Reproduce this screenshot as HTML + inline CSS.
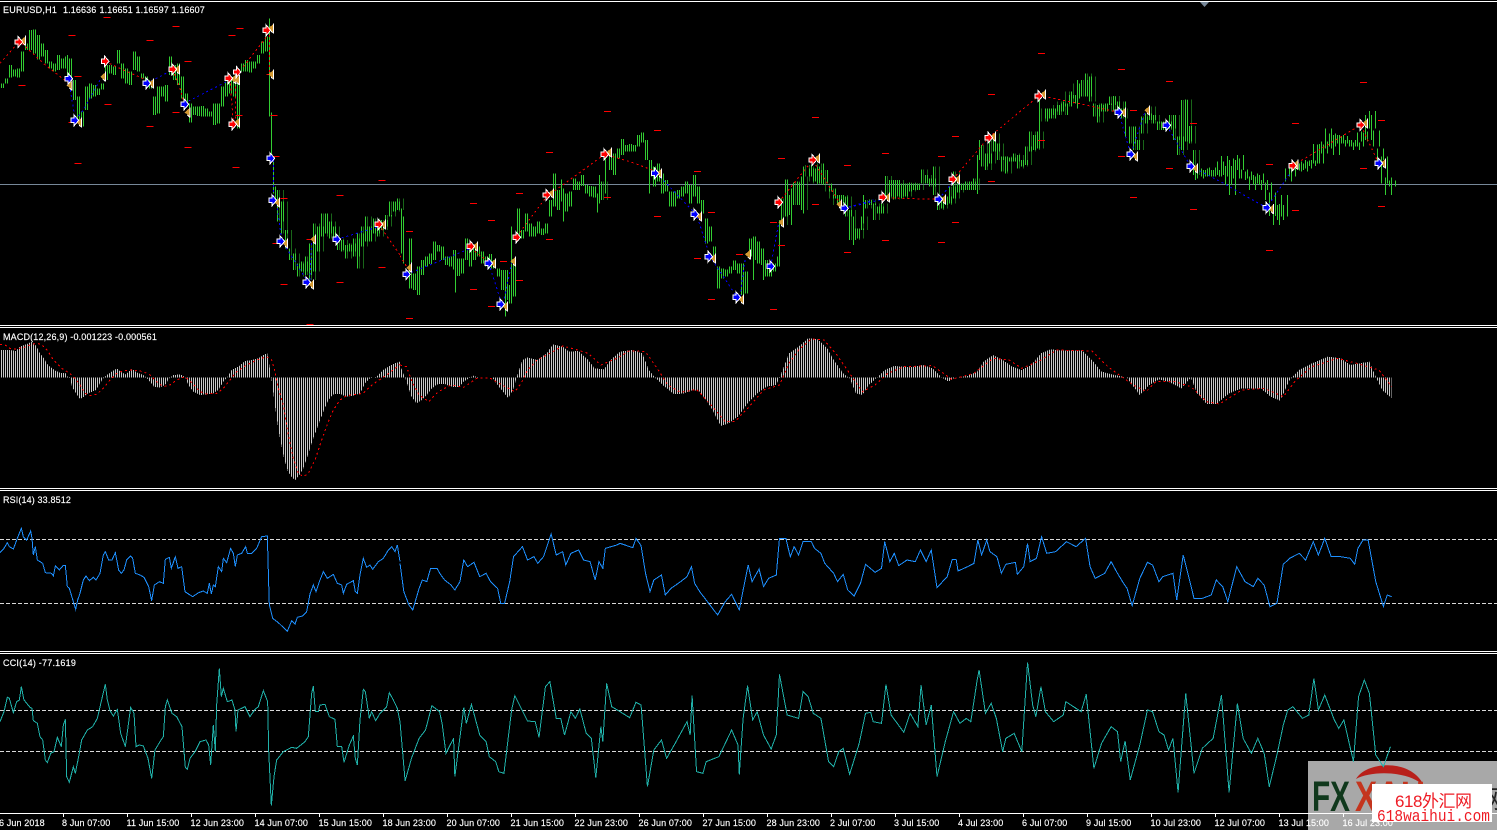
<!DOCTYPE html>
<html lang="en">
<head>
<meta charset="utf-8">
<title>EURUSD,H1</title>
<style>
html,body{margin:0;padding:0;background:#000;width:1497px;height:830px;overflow:hidden}
svg{display:block}
text{font-family:"Liberation Sans","Noto Sans CJK SC",sans-serif;font-size:9px;fill:#fff;letter-spacing:.12px;stroke:#fff;stroke-width:.15px}
text.w{stroke:none;letter-spacing:0}
.l{vector-effect:non-scaling-stroke;stroke-width:1;fill:none;shape-rendering:crispEdges}
.d{stroke-dasharray:2 3}
.r{stroke:#f00}
.b{stroke:#00f}
</style>
</head>
<body>
<svg xmlns="http://www.w3.org/2000/svg" width="1497" height="830" viewBox="0 0 1497 830">
<defs>
<pattern id="sa" patternUnits="userSpaceOnUse" width="4" height="10"><rect x="1" width="1" height="10" fill="#32cd32"/></pattern>
<pattern id="sb" patternUnits="userSpaceOnUse" width="4" height="10"><rect x="3" width="1" height="10" fill="#32cd32"/></pattern>
<pattern id="sg" patternUnits="userSpaceOnUse" width="2" height="10"><rect x="1" width="1" height="10" fill="#32cd32"/></pattern>
<pattern id="sw" patternUnits="userSpaceOnUse" width="2" height="10"><rect x="1" width="1" height="10" fill="#c8c8c8"/></pattern>
<g id="ra" shape-rendering="crispEdges"><polygon points="-9,-5 0,-5 0,-12 10,0 0,12 0,5 -9,5" fill="#f00" stroke="#fff" stroke-width="6" style="paint-order:stroke"/></g>
<g id="ba" shape-rendering="crispEdges"><polygon points="-9,-5 0,-5 0,-12 10,0 0,12 0,5 -9,5" fill="#00f" stroke="#fff" stroke-width="6" style="paint-order:stroke"/></g>
<g id="t" shape-rendering="crispEdges"><polygon points="7,-13 -8,0 7,13" fill="#d49a33"/><path d="M8 -15V15M7 14L0 8" stroke="#fff" stroke-width="3" fill="none"/></g>
<g id="wb" fill="none" stroke="#fff" stroke-width="12" shape-rendering="crispEdges">
<path transform="scale(.33333)" d="M0 250V264M12 235V250M24 195V232M36 208V230M48 205V232M60 155V215M72 130V150M84 90V150M96 88V160M108 105V178M120 130V170M132 150V190M144 185V205M156 190V215M168 165V210M180 175V205M192 170V205M204 175V240M216 240V300M228 290V365M240 335V380M252 260V330M264 250V295M276 255V290M288 265V285M300 250V268M312 195V240M324 195V220M336 200V225M348 150V190M360 190V235M372 205V250M384 215V255M396 155V210M408 170V215M420 220V235M432 230V255M444 240V265M456 290V345M468 260V340M480 260V290M492 255V305M504 170V225M516 195V240M528 190V255M540 230V295M552 280V320M564 310V368M576 320V345M588 320V348M600 318V350M612 325V350M624 335V350M636 310V375M648 310V370M660 260V320M672 245V290M684 240V280M696 230V290M708 240V385M720 190V215M732 180V215M744 185V218M756 185V205M768 165V190M780 125V160M792 110V155M832 570V665M844 605V700M856 690V745M868 745V780M880 760V810M892 790V830M904 785V815M916 770V825M928 730V840M940 670V815M952 680V755M964 640V710M976 640V700M988 665V715M1000 680V710M1012 715V750M1024 720V755M1036 735V775M1048 730V755M1060 715V770M1072 700V805M1084 680V740M1096 650V725M1108 680V725M1120 655V700M1132 680V710M1144 660V690M1156 645V680M1168 605V650M1180 605V635M1192 595V630"/>
<path transform="translate(400,60) scale(.33333)" d="M24 535V685M36 640V690M48 620V705M60 600V645M72 590V620M84 580V612M96 545V600M108 555V575M120 560V600M132 590V615M144 590V620M156 570V628M168 595V648M180 595V640M192 535V600M204 570V620M216 560V600M228 560V590M240 575V610M252 590V620M264 582V625M276 600V625M288 625V650M300 630V690M312 630V720M324 675V730M336 615V710M348 445V530M360 510V535M372 460V515M384 490V530M396 500V530M408 485V520M420 505V525M432 490V520M444 420V470M456 340V440M468 390V450M480 385V425M492 400V455M504 395V440M516 355V390M528 365V390M540 345V378M552 375V400M564 378V410M576 380V412M588 400V430M604 365V420M624 280V330M636 280V345M648 265V295M660 237V285M672 255V275M684 252V275M696 255V275M708 225V260M720 217V248M732 240V300M744 300V350M756 320V380M768 310V365M780 340V400M792 360V395M804 395V440M816 395V440M828 390V415M840 380V410M852 365V400M864 375V430M876 345V410M888 380V430M900 420V460M912 475V550M924 500V545M936 560V600M948 620V685M960 625V655M972 628V650M984 620V640M996 602V630M1008 610V640M1020 610V705M1032 635V700M1044 535V590M1056 530V600M1068 545V610M1080 565V615M1092 600V650M1104 615V650M1116 610V635M1128 590V620M1144 415V495M1152 358V470M1164 405V465M1180 367V435M1192 365V435M1204 350V450M1222 315V350M1234 325V365M1246 320V370M1258 310V375M1270 330V370M1282 370V395M1294 385V415M1306 405V435M1318 405V430"/>
<path transform="translate(840,40) scale(.33333)" d="M4 465V510M16 470V530M28 510V600M40 565V600M52 565V595M64 530V570M76 480V505M88 478V495M100 490V540M112 500V520M124 490V520M136 408V470M148 420V475M160 420V478M172 420V470M184 430V475M196 430V470M208 428V455M220 430V450M232 430V450M244 388V430M256 405V430M268 415V440M280 380V465M292 475V510M304 470V505M316 470V495M328 440V490M340 395V475M352 430V458M364 430V450M376 425V450M388 425V450M400 415V450M424 315V380M436 340V390M448 300V370M460 280V335M472 310V360M484 350V395M496 350V400M508 352V365M520 340V365M532 345V385M544 360V380M556 320V375M568 275V335M580 285V330M592 275V325M610 205V245M622 205V235M634 205V235M646 195V225M658 185V215M670 190V225M682 155V200M694 165V190M706 130V175M724 120V170M736 100V170M748 110V185M760 190V230M772 195V248M784 190V215M796 190V215M808 170V195M820 168V215M832 185V215M844 205V235M868 260V310M880 260V330M892 300V330M904 230V280M916 220V250M928 200V240M940 225V250M952 245V270M964 245V270M976 245V270M988 225V265M1000 225V300M1012 290V345M1024 180V330M1036 178V305M1048 258V310M1060 330V405"/>
<path transform="translate(1180,0) scale(.33333)" d="M54 510V535M66 505V530M78 510V530M90 502V530M102 510V530M114 485V525M126 468V530M138 498V555M150 480V585M162 475V535M174 465V510M186 508V535M198 515V540M210 530V570M222 525V555M234 520V550M246 540V570M258 548V600M270 578V648M282 612V675M294 615V660M306 585V650M318 505V545M330 505V530M342 490V512M354 490V510M366 485V515M378 480V505M390 482V498M402 432V490M414 433V490M426 425V460M438 385V445M450 400V440M462 405V465M474 405V430M486 408V430M498 420V440M510 420V440M522 428V450M534 398V440M546 395V425M558 345V420M570 333V385M582 392V440M594 445V480M606 470V550M618 532V585M630 542V560"/>
</g>
<g id="nb" fill="none" stroke="#fff" stroke-width="6" shape-rendering="crispEdges">
<path transform="scale(.33333)" d="M202 165V240M808 55V350M814 338V470M820 470V580M826 560V610"/>
<path transform="translate(400,60) scale(.33333)" d="M4 445V580M10 470V610M166 595V698M316 690V770M334 500V705M484 358V405M490 385V485M592 410V458M598 345V430M616 280V400M748 335V400M1060 540V660M1090 570V660M1138 480V620M1174 385V495M1210 320V460"/>
<path transform="translate(840,40) scale(.33333)" d="M40 530V615M70 465V550M412 345V462M418 300V360M598 180V300M712 120V205M856 185V290M1066 390V420"/>
</g>
<mask id="ma" maskUnits="userSpaceOnUse" x="0" y="0" width="1497" height="325"><use href="#wb"/></mask>
<mask id="mc" maskUnits="userSpaceOnUse" x="0" y="0" width="1497" height="325"><use href="#wb" transform="translate(4,0)"/></mask>
<mask id="ms" maskUnits="userSpaceOnUse" x="0" y="0" width="1497" height="325"><use href="#nb"/></mask>
<mask id="mh" maskUnits="userSpaceOnUse" x="0" y="328" width="1497" height="160">
<g fill="#fff" shape-rendering="crispEdges">
<polygon transform="translate(0,325) scale(.33333)" points="0,158 0,75 30,75 48,78 60,65 78,58 96,50 108,62 120,85 132,100 144,120 156,130 168,138 180,143 198,145 204,158 210,160 216,185 228,205 240,222 252,215 264,205 276,200 288,195 300,175 310,160 320,150 335,140 350,130 362,140 376,148 396,132 410,142 430,150 440,158 450,170 462,185 480,188 495,180 508,160 520,150 540,148 555,155 565,180 580,200 600,210 620,208 640,205 655,195 670,170 680,160 695,135 715,125 735,108 755,105 775,100 790,90 802,85 808,120 814,158 822,220 828,265 834,305 840,340 852,400 864,440 878,460 886,465 898,450 910,430 922,395 940,340 955,300 970,260 985,225 1000,208 1020,207 1040,215 1060,212 1080,205 1095,175 1110,160 1130,155 1150,135 1170,122 1185,115 1200,110 1200,158"/>
<polygon transform="translate(400,330) scale(.63776,.33333)" points="0,143 0,105 4,125 8,143 12,165 18,200 26,220 34,210 42,195 50,175 58,163 70,162 80,170 92,172 100,155 115,137 125,143 145,143 155,170 170,205 178,175 184,135 192,90 200,82 215,90 230,70 240,43 255,50 265,65 280,63 295,90 305,115 320,118 330,90 345,65 365,60 380,70 390,120 400,143 415,170 430,193 445,190 460,180 470,185 480,210 490,240 503,288 515,280 530,260 545,220 560,190 575,170 590,165 600,120 610,70 625,50 640,25 655,28 670,55 680,90 695,130 705,145 715,190 725,195 735,165 745,148 760,120 775,108 800,112 820,105 835,115 850,143 860,155 870,143 890,138 905,125 915,95 930,75 945,90 960,110 975,120 990,105 1005,70 1020,58 1040,62 1070,62 1085,90 1100,125 1120,135 1140,143 1150,170 1160,195 1175,165 1190,148 1205,155 1225,175 1240,143 1250,190 1265,222 1280,222 1300,190 1320,175 1350,175 1365,200 1380,212 1395,150 1410,120 1430,100 1455,80 1475,85 1490,105 1505,100 1520,95 1530,140 1540,180 1555,205 1555,143"/>
</g>
</mask>
</defs>

<rect width="1497" height="830" fill="#000"/>

<!-- watermark base -->
<rect x="1308" y="761" width="189" height="69" fill="#a8a8a8"/>
<path d="M1356 779C1366 761 1412 758 1424 786C1410 771 1372 770 1356 779Z" fill="#b8201a"/>
<text class="w" x="1312" y="811" textLength="38" lengthAdjust="spacingAndGlyphs" style="font-size:43px;font-weight:bold;fill:#10381c">FX</text>
<text class="w" x="1355" y="811" textLength="70" lengthAdjust="spacingAndGlyphs" style="font-size:43px;font-weight:bold;fill:#c4351e">XAU</text>
<text class="w" x="1428" y="808" style="font-size:25px;fill:#222">汇金网</text>

<!-- panel rules -->
<g fill="#fff" shape-rendering="crispEdges">
<rect y="1" width="1497" height="1"/>
<rect y="325" width="1497" height="1"/><rect y="327" width="1497" height="1"/>
<rect y="488" width="1497" height="1"/><rect y="490" width="1497" height="1"/>
<rect y="651" width="1497" height="1"/><rect y="653" width="1497" height="1"/>
<rect y="813" width="1497" height="1"/>
</g>
<polygon points="1200,2 1209,2 1204.5,7" fill="#778899"/>
<rect y="184" width="1497" height="1" fill="#778899" shape-rendering="crispEdges"/>

<!-- price bars -->
<rect x="0" y="0" width="1497" height="325" fill="url(#sa)" mask="url(#ma)"/>
<rect x="0" y="0" width="1497" height="325" fill="url(#sb)" mask="url(#mc)"/>
<rect x="0" y="0" width="1497" height="325" fill="url(#sg)" mask="url(#ms)"/>

<!-- zigzag dotted lines -->
<g transform="scale(.33333)">
<path class="l d r" d="M0 190L56 126M66 130L85 148L130 190L206 250M315 184L370 210L440 240M518 208L540 265L552 310M690 235L700 370M706 230V370M730 200L800 110M808 90V223M1136 673L1200 765"/>
<path class="l d b" d="M206 240L226 360M226 360L250 330L300 240M440 250L518 210M552 310L690 240M820 480V600M830 610L845 720M850 730L920 840M930 840L935 720M1010 718L1136 680"/>
</g>
<g transform="translate(400,60) scale(.33333)">
<path class="l d r" d="M0 587L20 620M212 565L266 605M350 530L440 410L614 283L690 305L770 335M1136 427L1238 300L1320 430"/>
<path class="l d b" d="M20 643L212 565M266 610L305 730M310 730L335 610M770 340L890 465L930 590L1010 710M1020 710L1035 600M1112 619L1136 490M1333 445L1440 420"/>
</g>
<g transform="translate(840,40) scale(.33333)">
<path class="l d r" d="M128 472L180 475L296 478M338 418L446 293L596 168L625 172L700 187L760 200L836 217"/>
<path class="l d b" d="M12 505L100 480M296 478L335 430M836 217L872 343L915 215M980 256L1052 379"/>
</g>
<g transform="translate(1180,0) scale(.33333)">
<path class="l d r" d="M338 497L542 375L596 490"/>
<path class="l d b" d="M45 505L140 555L200 590L260 623L330 520"/>
</g>

<!-- red level marks -->
<g fill="none" stroke="#f00" stroke-width="3" shape-rendering="crispEdges">
<path transform="scale(.33333)" d="M311 52h21M517 79h21M205 106h21M439 121h21M685 106h21M709 85h21M553 184h21M223 229h21M55 256h21M313 313h21M517 337h21M439 379h21M205 367h21M553 442h21M697 502h21M223 490h21M706 346h21M811 346h21M817 469h21M841 595h21M1135 541h21M1009 586h21M919 718h21M817 730h21M1135 802h21M1009 847h21M841 853h21M919 973h21M685 367h21M799 223h21"/>
<path transform="translate(400,60) scale(.33333)" d="M612 154h21M762 211h21M438 277h21M348 400h21M210 430h21M264 481h21M18 514h21M882 334h21M1236 172h21M1134 295h21M612 412h21M762 469h21M924 457h21M1110 487h21M1236 433h21M1134 556h21M882 595h21M1008 583h21M300 604h21M348 661h21M210 688h21M264 739h21M438 538h21M18 775h21M924 718h21M1110 748h21"/>
<path transform="translate(840,40) scale(.33333)" d="M594 40h21M834 88h21M978 124h21M444 163h21M336 289h21M126 340h21M294 349h21M12 376h21M870 211h21M1050 250h21M594 301h21M834 349h21M978 385h21M444 424h21M870 472h21M1050 508h21M336 547h21M126 601h21M294 607h21M12 637h21"/>
<path transform="translate(1180,0) scale(.33333)" d="M336 370h21M258 493h21M540 247h21M594 361h21M540 505h21M336 631h21M594 619h21M258 751h21"/>
</g>

<!-- arrows and triangles -->
<g transform="scale(.33333)">
<use href="#t" x="69" y="122"/><use href="#ra" x="56" y="126"/>
<use href="#t" x="208" y="256"/><use href="#ba" x="206" y="236"/>
<use href="#t" x="237" y="367"/><use href="#ba" x="224" y="361"/>
<use href="#ra" x="315" y="184"/><use href="#t" x="309" y="230"/>
<use href="#t" x="453" y="250"/><use href="#ba" x="440" y="250"/>
<use href="#t" x="531" y="208"/><use href="#ra" x="518" y="208"/>
<use href="#t" x="562" y="337"/><use href="#ba" x="554" y="313"/>
<use href="#t" x="700" y="237"/><use href="#ra" x="686" y="235"/>
<use href="#t" x="711" y="240"/><use href="#ra" x="711" y="216"/>
<use href="#t" x="711" y="367"/><use href="#ra" x="698" y="373"/>
<use href="#t" x="813" y="85"/><use href="#ra" x="800" y="91"/><use href="#t" x="813" y="223"/>
<use href="#ba" x="812" y="475"/>
<use href="#t" x="831" y="607"/><use href="#ba" x="818" y="601"/>
<use href="#t" x="855" y="730"/><use href="#ba" x="842" y="724"/>
<use href="#t" x="939" y="718"/>
<use href="#t" x="933" y="853"/><use href="#ba" x="920" y="847"/>
<use href="#ba" x="1010" y="718"/>
<use href="#t" x="1149" y="673"/><use href="#ra" x="1136" y="673"/>
</g>
<g transform="translate(400,60) scale(.33333)">
<use href="#t" x="27" y="623"/><use href="#ba" x="19" y="643"/>
<use href="#t" x="225" y="559"/><use href="#ra" x="212" y="559"/>
<use href="#t" x="279" y="610"/><use href="#ba" x="266" y="610"/>
<use href="#t" x="315" y="739"/><use href="#ba" x="302" y="733"/>
<use href="#t" x="339" y="604"/><use href="#ra" x="350" y="532"/>
<use href="#t" x="453" y="400"/><use href="#ra" x="440" y="405"/>
<use href="#t" x="627" y="277"/><use href="#ra" x="614" y="283"/>
<use href="#t" x="777" y="340"/><use href="#ba" x="765" y="340"/>
<use href="#t" x="897" y="469"/><use href="#ba" x="884" y="463"/>
<use href="#t" x="939" y="595"/><use href="#ba" x="926" y="590"/>
<use href="#t" x="1023" y="718"/><use href="#ba" x="1010" y="712"/>
<use href="#t" x="1043" y="583"/><use href="#ba" x="1112" y="619"/>
<use href="#t" x="1143" y="487"/><use href="#ra" x="1136" y="427"/>
<use href="#t" x="1251" y="295"/><use href="#ra" x="1238" y="300"/>
<use href="#t" x="1317" y="433"/><use href="#ba" x="1333" y="445"/>
</g>
<g transform="translate(840,40) scale(.33333)">
<use href="#t" x="141" y="472"/><use href="#ra" x="128" y="472"/>
<use href="#t" x="309" y="478"/><use href="#ba" x="296" y="478"/>
<use href="#t" x="351" y="418"/><use href="#ra" x="338" y="418"/>
<use href="#t" x="459" y="290"/><use href="#ra" x="446" y="293"/>
<use href="#t" x="609" y="163"/><use href="#ra" x="596" y="168"/>
<use href="#t" x="849" y="217"/><use href="#ba" x="836" y="217"/>
<use href="#t" x="885" y="349"/><use href="#ba" x="872" y="343"/>
<use href="#t" x="921" y="211"/><use href="#ba" x="980" y="256"/>
<use href="#t" x="1065" y="385"/><use href="#ba" x="1052" y="379"/>
</g>
<g transform="translate(1180,0) scale(.33333)">
<use href="#t" x="273" y="627"/><use href="#ba" x="260" y="623"/>
<use href="#t" x="346" y="494"/><use href="#ra" x="338" y="497"/>
<use href="#t" x="555" y="370"/><use href="#ra" x="542" y="375"/>
<use href="#t" x="609" y="490"/><use href="#ba" x="596" y="490"/>
</g>

<!-- MACD -->
<rect x="0" y="328" width="1497" height="160" fill="url(#sw)" mask="url(#mh)"/>
<polyline class="l d r" transform="translate(0,325) scale(.33333)" points="0,58 15,60 30,70 48,72 70,68 90,60 108,55 125,58 145,80 160,105 185,130 210,145 225,160 240,180 255,205 270,212 290,208 310,190 330,165 350,145 370,137 400,135 430,140 450,150 470,170 490,185 510,180 530,165 555,155 580,178 600,200 620,207 650,205 670,190 690,165 710,140 740,120 770,105 800,95 815,105 825,140 835,190 850,240 865,330 880,400 895,445 910,455 925,445 945,405 965,345 985,290 1000,255 1020,225 1040,212 1070,208 1090,205 1110,185 1130,170 1160,150 1200,118"/>
<polyline class="l d r" transform="translate(400,330) scale(.63776,.33333)" points="0,105 10,110 20,160 30,195 45,215 60,185 80,165 100,172 120,145 140,143 160,165 180,185 190,160 200,120 215,90 235,70 255,48 275,58 295,70 315,105 340,85 360,62 385,65 405,120 420,165 440,187 465,178 490,230 510,275 525,275 545,235 570,180 595,165 610,100 625,60 645,27 665,30 685,75 705,130 725,185 745,165 765,130 790,110 835,107 865,148 900,130 930,85 955,90 975,115 1005,90 1030,60 1085,63 1110,110 1130,138 1150,165 1170,185 1185,155 1215,155 1240,170 1265,215 1285,222 1320,180 1355,175 1385,200 1405,150 1430,110 1470,85 1500,100 1535,120 1555,170"/>

<!-- RSI -->
<path d="M0 539.5H1497M0 603.5H1497" stroke="#d8d8d8" stroke-dasharray="4 2" fill="none" shape-rendering="crispEdges"/>
<g stroke="#1e90ff">
<polyline class="l" transform="translate(0,490) scale(.33333)" points="0,188 12,175 22,158 28,170 40,177 52,145 64,115 70,140 80,150 92,123 96,145 100,195 106,170 112,210 128,220 136,248 155,250 160,258 166,228 178,240 190,226 196,226 202,290 208,295 216,322 227,358 233,330 240,310 250,270 258,258 268,272 280,262 288,270 300,250 310,195 316,185 326,210 336,210 346,188 356,240 364,250 372,240 380,210 392,198 398,205 406,250 420,255 432,262 446,290 455,332 463,285 478,275 490,280 496,208 508,202 514,235 526,200 534,235 545,230 555,305 570,315 578,320 596,308 610,303 622,310 628,280 634,312 640,285 646,290 655,230 665,245 670,205 680,218 692,175 700,190 706,230 712,195 725,190 737,170 742,190 755,190 770,175 785,140 802,138 806,280 808,345 818,385 835,398 862,424 875,392 885,402 892,382 908,378 920,365 930,312 940,285 948,305 958,275 970,245 982,265 1000,253 1012,280 1025,285 1030,310 1040,283 1060,272 1066,305 1072,310 1080,255 1090,205 1100,232 1110,225 1118,238 1135,215 1150,205 1165,180 1175,170 1185,185 1192,165 1200,215"/>
<polyline class="l" transform="translate(400,525) scale(.63776,.33333)" points="0,115 6,200 14,240 20,255 30,190 35,165 42,170 48,130 58,130 64,150 70,165 80,180 86,195 94,170 100,105 106,125 116,112 125,155 135,145 142,170 153,190 158,235 164,235 172,170 178,95 192,65 200,105 210,95 216,115 225,95 237,27 245,90 255,80 260,120 268,85 280,75 288,105 298,110 306,165 312,110 318,130 322,70 340,60 345,55 365,68 370,40 378,62 385,145 392,200 398,165 410,150 416,210 425,190 440,170 450,155 457,125 462,175 470,200 480,225 498,270 510,230 520,208 532,255 538,195 546,120 552,170 563,132 570,185 578,160 590,150 595,40 605,40 612,95 618,65 625,90 632,50 645,50 650,70 660,85 666,115 680,145 686,170 695,148 702,195 712,213 722,175 730,118 745,142 755,130 760,50 768,110 775,85 782,122 795,105 808,110 816,75 825,110 833,75 842,188 858,155 866,103 872,103 875,138 890,125 900,115 906,45 912,90 920,45 925,80 936,95 943,145 950,118 965,112 968,148 978,125 984,55 988,110 998,100 1006,35 1014,85 1028,80 1045,50 1060,65 1075,40 1082,125 1090,160 1105,145 1115,110 1125,145 1133,170 1140,190 1148,242 1160,160 1172,112 1180,120 1190,170 1196,155 1212,145 1218,225 1228,90 1236,150 1245,220 1258,220 1272,210 1280,165 1290,185 1298,230 1312,125 1325,170 1338,185 1345,160 1355,180 1364,245 1375,235 1385,118 1395,100 1410,85 1420,105 1432,50 1440,90 1450,40 1460,95 1475,95 1490,100 1497,118 1502,70 1510,45 1518,45 1530,170 1542,245 1548,210 1555,215"/>
</g>

<!-- CCI -->
<path d="M0 710.5H1497M0 751.5H1497" stroke="#d8d8d8" stroke-dasharray="4 2" fill="none" shape-rendering="crispEdges"/>
<g stroke="#20b2aa">
<polyline class="l" transform="translate(0,650) scale(.33333)" points="0,215 12,185 22,142 28,145 40,188 50,155 58,150 64,110 72,150 90,172 96,175 100,212 112,220 120,260 128,270 136,330 142,338 152,310 162,305 172,262 184,290 190,225 196,208 200,380 208,397 220,350 226,370 236,320 245,270 262,240 278,230 292,205 306,145 316,103 322,150 330,182 340,198 352,178 362,250 376,290 392,172 402,190 408,290 418,285 430,288 444,325 455,385 465,300 480,275 490,260 496,170 502,150 516,190 530,200 546,230 556,352 562,358 570,325 585,305 600,275 618,270 626,285 632,345 640,225 646,305 650,165 658,55 664,140 670,115 682,155 696,150 705,180 708,245 714,180 735,170 750,200 765,178 775,170 790,122 803,155 806,300 814,467 822,380 830,330 850,305 875,292 890,295 915,275 925,260 935,130 940,108 946,185 955,185 960,165 975,163 988,200 1005,208 1012,290 1025,290 1032,337 1048,285 1060,258 1066,325 1072,345 1080,210 1090,118 1096,125 1108,205 1115,185 1127,212 1140,190 1160,170 1168,128 1180,150 1192,175 1200,215"/>
<polyline class="l" transform="translate(400,655) scale(.63776,.33333)" points="0,200 8,378 18,310 30,250 40,225 50,152 62,170 66,205 72,295 84,250 86,365 100,158 104,205 112,148 125,240 135,260 140,305 150,320 155,350 163,355 175,165 180,122 190,160 200,198 212,200 218,247 228,95 235,80 245,190 252,190 258,240 268,170 275,190 282,162 292,235 300,250 307,368 315,215 318,260 324,85 332,155 345,170 360,188 370,142 378,150 388,395 398,285 410,255 418,310 430,270 450,200 455,240 458,122 465,350 475,355 480,320 500,305 520,225 530,270 532,358 538,190 545,92 553,195 560,170 570,240 582,282 590,240 595,58 607,180 625,190 632,110 640,125 648,175 660,190 672,320 680,335 688,290 695,280 705,358 720,265 730,175 738,172 742,200 755,205 762,88 770,180 790,232 800,175 812,215 817,90 825,210 833,150 842,365 855,260 868,170 878,205 888,190 895,200 905,75 908,45 918,175 927,145 935,190 945,290 950,250 963,235 975,290 984,22 992,150 997,185 1005,95 1012,170 1025,200 1040,180 1044,140 1060,160 1068,170 1076,118 1088,340 1100,265 1115,215 1125,230 1130,320 1137,258 1145,375 1160,270 1172,165 1180,170 1190,230 1198,240 1205,285 1212,250 1220,412 1232,115 1245,355 1258,280 1275,250 1288,120 1300,412 1313,145 1322,250 1335,295 1345,250 1355,295 1363,395 1375,300 1385,210 1392,165 1400,155 1415,190 1425,180 1433,70 1440,165 1450,120 1465,195 1472,220 1480,195 1495,320 1503,125 1512,75 1520,115 1530,300 1542,335 1553,275"/>
</g>

<!-- axis ticks -->
<path fill="none" stroke="#fff" shape-rendering="crispEdges" d="M63.5 813V817M127.5 813V817M191.5 813V817M255.5 813V817M319.5 813V817M383.5 813V817M447.5 813V817M511.5 813V817M575.5 813V817M639.5 813V817M703.5 813V817M767.5 813V817M831.5 813V817M895.5 813V817M959.5 813V817M1023.5 813V817M1087.5 813V817M1151.5 813V817M1215.5 813V817M1279.5 813V817M1343.5 813V817"/>

<!-- labels -->
<text x="3" y="13" textLength="54">EURUSD,H1</text>
<text x="63" y="13">1.16636</text><text x="99.5" y="13">1.16651</text><text x="135.5" y="13">1.16597</text><text x="171.5" y="13">1.16607</text>
<text x="3" y="340" textLength="154">MACD(12,26,9) -0.001223 -0.000561</text>
<text x="3" y="503" textLength="68">RSI(14) 33.8512</text>
<text x="3" y="666" textLength="73">CCI(14) -77.1619</text>

<text x="-1" y="826">6 Jun 2018</text>
<text x="62" y="826">8 Jun 07:00</text>
<text x="126.5" y="826">11 Jun 15:00</text>
<text x="190.5" y="826">12 Jun 23:00</text>
<text x="254.5" y="826">14 Jun 07:00</text>
<text x="318.5" y="826">15 Jun 15:00</text>
<text x="382.5" y="826">18 Jun 23:00</text>
<text x="446.5" y="826">20 Jun 07:00</text>
<text x="510.5" y="826">21 Jun 15:00</text>
<text x="574.5" y="826">22 Jun 23:00</text>
<text x="638.5" y="826">26 Jun 07:00</text>
<text x="702.5" y="826">27 Jun 15:00</text>
<text x="766.5" y="826">28 Jun 23:00</text>
<text x="830" y="826">2 Jul 07:00</text>
<text x="894" y="826">3 Jul 15:00</text>
<text x="958" y="826">4 Jul 23:00</text>
<text x="1022" y="826">6 Jul 07:00</text>
<text x="1086" y="826">9 Jul 15:00</text>
<text x="1150.5" y="826">10 Jul 23:00</text>
<text x="1214.5" y="826">12 Jul 07:00</text>
<text x="1278.5" y="826">13 Jul 15:00</text>
<text x="1342.5" y="826">16 Jul 23:00</text>

<!-- watermark box -->
<rect x="1372" y="784" width="120" height="38" fill="#fff"/>
<text class="w" x="1395" y="807" textLength="77" style="font-size:17px;fill:#ee1c25">618外汇网</text>
<text class="w" x="1377" y="821" textLength="113" lengthAdjust="spacingAndGlyphs" style="font-size:17px;fill:#ee1c25;font-family:'Liberation Mono',monospace">618waihui.com</text>
</svg>
</body>
</html>
